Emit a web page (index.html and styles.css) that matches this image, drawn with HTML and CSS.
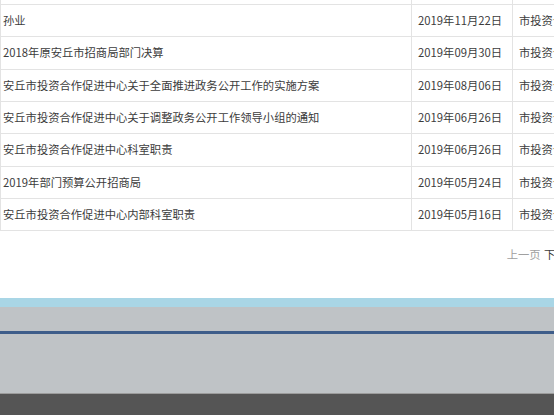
FILE: index.html
```html
<!DOCTYPE html>
<html>
<head>
    <meta charset="UTF-8">
    <title>信息公开列表</title>
    <link rel="stylesheet" href="styles.css">
</head>
<body>
    <div class="page">
        <div class="list-wrap">
            <table class="list">
                <tr class="row-cut">
                    <td></td><td></td><td></td>
                </tr>
                <tr>
                    <td class="title">孙业</td>
                    <td class="date">2019年11月22日</td>
                    <td class="org">市投资合作促进中心</td>
                </tr>
                <tr>
                    <td class="title">2018年原安丘市招商局部门决算</td>
                    <td class="date">2019年09月30日</td>
                    <td class="org">市投资合作促进中心</td>
                </tr>
                <tr>
                    <td class="title">安丘市投资合作促进中心关于全面推进政务公开工作的实施方案</td>
                    <td class="date">2019年08月06日</td>
                    <td class="org">市投资合作促进中心</td>
                </tr>
                <tr>
                    <td class="title">安丘市投资合作促进中心关于调整政务公开工作领导小组的通知</td>
                    <td class="date">2019年06月26日</td>
                    <td class="org">市投资合作促进中心</td>
                </tr>
                <tr>
                    <td class="title">安丘市投资合作促进中心科室职责</td>
                    <td class="date">2019年06月26日</td>
                    <td class="org">市投资合作促进中心</td>
                </tr>
                <tr>
                    <td class="title">2019年部门预算公开招商局</td>
                    <td class="date">2019年05月24日</td>
                    <td class="org">市投资合作促进中心</td>
                </tr>
                <tr>
                    <td class="title">安丘市投资合作促进中心内部科室职责</td>
                    <td class="date">2019年05月16日</td>
                    <td class="org">市投资合作促进中心</td>
                </tr>
            </table>

            <div class="pager">
                <span class="disabled">上一页</span>
                <a href="#">下一页</a>
            </div>
        </div>
    </div>

    <div class="footer-band"></div>
    <div class="footer">
        <div class="footer-line"></div>
        <div class="footer-body"></div>
    </div>
    <div class="footer-bottom"></div>
</body>
</html>
```

FILE: styles.css
```css
html, body {
    margin: 0;
    padding: 0;
    overflow: hidden;
}
body {
    font-family: "Noto Sans CJK SC", "Microsoft YaHei", sans-serif;
    font-size: 11.3px;
    color: #3c3c3c;
    background: #fff;
}
.page {
    width: 554px;
    overflow: hidden;
}
.list-wrap {
    width: 640px;
    height: 298px;
}
.list {
    width: 640px;
    border-collapse: separate;
    border-spacing: 0;
    table-layout: fixed;
    border-left: 1px solid #e3e3e3;
}
.list td {
    padding: 0;
    height: 31.35px;
    line-height: 31.35px;
    border-bottom: 1px solid #e3e3e3;
    white-space: nowrap;
    overflow: hidden;
}
.list .row-cut td {
    height: 4px;
    line-height: 4px;
}
.list td + td {
    border-left: 1px solid #e3e3e3;
}
.list td:nth-child(1) { width: 408px; padding-left: 2px; }
.list td:nth-child(2) { width: 94px; padding-left: 6px; }
.list td:nth-child(3) { padding-left: 6px; }

.pager {
    text-align: right;
    padding-right: 62px;
    margin-top: 15px;
    line-height: 16px;
}
.pager span,
.pager a {
    margin-left: 1px;
}
.pager .disabled {
    color: #a0a0a0;
}
.pager a {
    color: #3c3c3c;
    text-decoration: none;
}

.footer-band {
    height: 9px;
    background: #a9d6e6;
}
.footer {
    background: #bfc3c6;
    padding-top: 24px;
}
.footer-line {
    height: 3px;
    background: #3e5d8a;
}
.footer-body {
    height: 59px;
    border-bottom: 1px solid #9c9c9c;
}
.footer-bottom {
    height: 40px;
    background: #555;
}
```
